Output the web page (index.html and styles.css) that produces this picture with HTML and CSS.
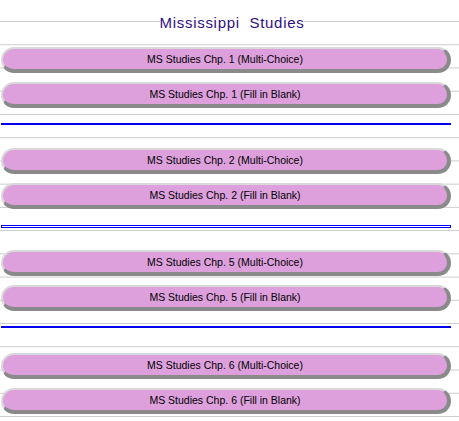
FILE: index.html
```html
<!DOCTYPE html>
<html>
<head>
<meta charset="utf-8">
<title>Mississippi Studies</title>
<link rel="stylesheet" href="styles.css">
</head>
<body>
<div class="page">
  <h1 class="title"><span>Mississippi&nbsp; Studies</span></h1>
  <div class="group">
    <a class="btn" href="#">MS Studies Chp. 1 (Multi-Choice)</a>
    <a class="btn" href="#">MS Studies Chp. 1 (Fill in Blank)</a>
  </div>
  <hr class="sep">
  <div class="group">
    <a class="btn" href="#">MS Studies Chp. 2 (Multi-Choice)</a>
    <a class="btn" href="#">MS Studies Chp. 2 (Fill in Blank)</a>
  </div>
  <hr class="sep sep-box">
  <div class="group">
    <a class="btn" href="#">MS Studies Chp. 5 (Multi-Choice)</a>
    <a class="btn" href="#">MS Studies Chp. 5 (Fill in Blank)</a>
  </div>
  <hr class="sep sep-wide">
  <div class="group">
    <a class="btn" href="#">MS Studies Chp. 6 (Multi-Choice)</a>
    <a class="btn" href="#">MS Studies Chp. 6 (Fill in Blank)</a>
  </div>
</div>
</body>
</html>
```
FILE: styles.css
```css
html, body {
  margin: 0;
  padding: 0;
  background: #fff;
}
body {
  min-height: 421px;
  background-image: linear-gradient(to bottom, #cccccc 0, #cccccc 1px, transparent 1px);
  background-size: 100% 23.24px;
  background-position: 0 21px;
  background-repeat: repeat;
  font-family: "Liberation Sans", Arial, sans-serif;
}
.page {
  width: 450px;
  padding-left: 1px;
  padding-bottom: 4px;
}
.title {
  margin: 0;
  padding-top: 14px;
  padding-left: 12px;
  text-align: center;
  font-weight: normal;
  font-size: 15px;
  line-height: 18px;
  letter-spacing: 0.7px;
  color: #2e0f86;
}
.title span {
  background: #fff;
}
.group {
  display: flex;
  flex-direction: column;
  gap: 9px;
  margin-top: 15px;
}
.btn {
  display: block;
  height: 20px;
  line-height: 20px;
  background: #dda0dd;
  border-style: solid;
  border-width: 2px 4px 4px 2px;
  border-color: #d9d9d9 #8a8a8a #8a8a8a #d9d9d9;
  border-radius: 14px;
  text-align: center;
  font-size: 10.5px;
  color: #000;
  text-decoration: none;
}
.sep {
  margin: 15px 0 23px 0;
  height: 0;
  border: 0;
  border-top: 2px solid #0000ee;
}
.sep-box {
  height: 1px;
  border: 1px solid #0000ee;
  margin-top: 16px;
  margin-bottom: 22px;
}
.sep-wide {
  margin-bottom: 25px;
}
.sep + .group {
  margin-top: 0;
}
```
